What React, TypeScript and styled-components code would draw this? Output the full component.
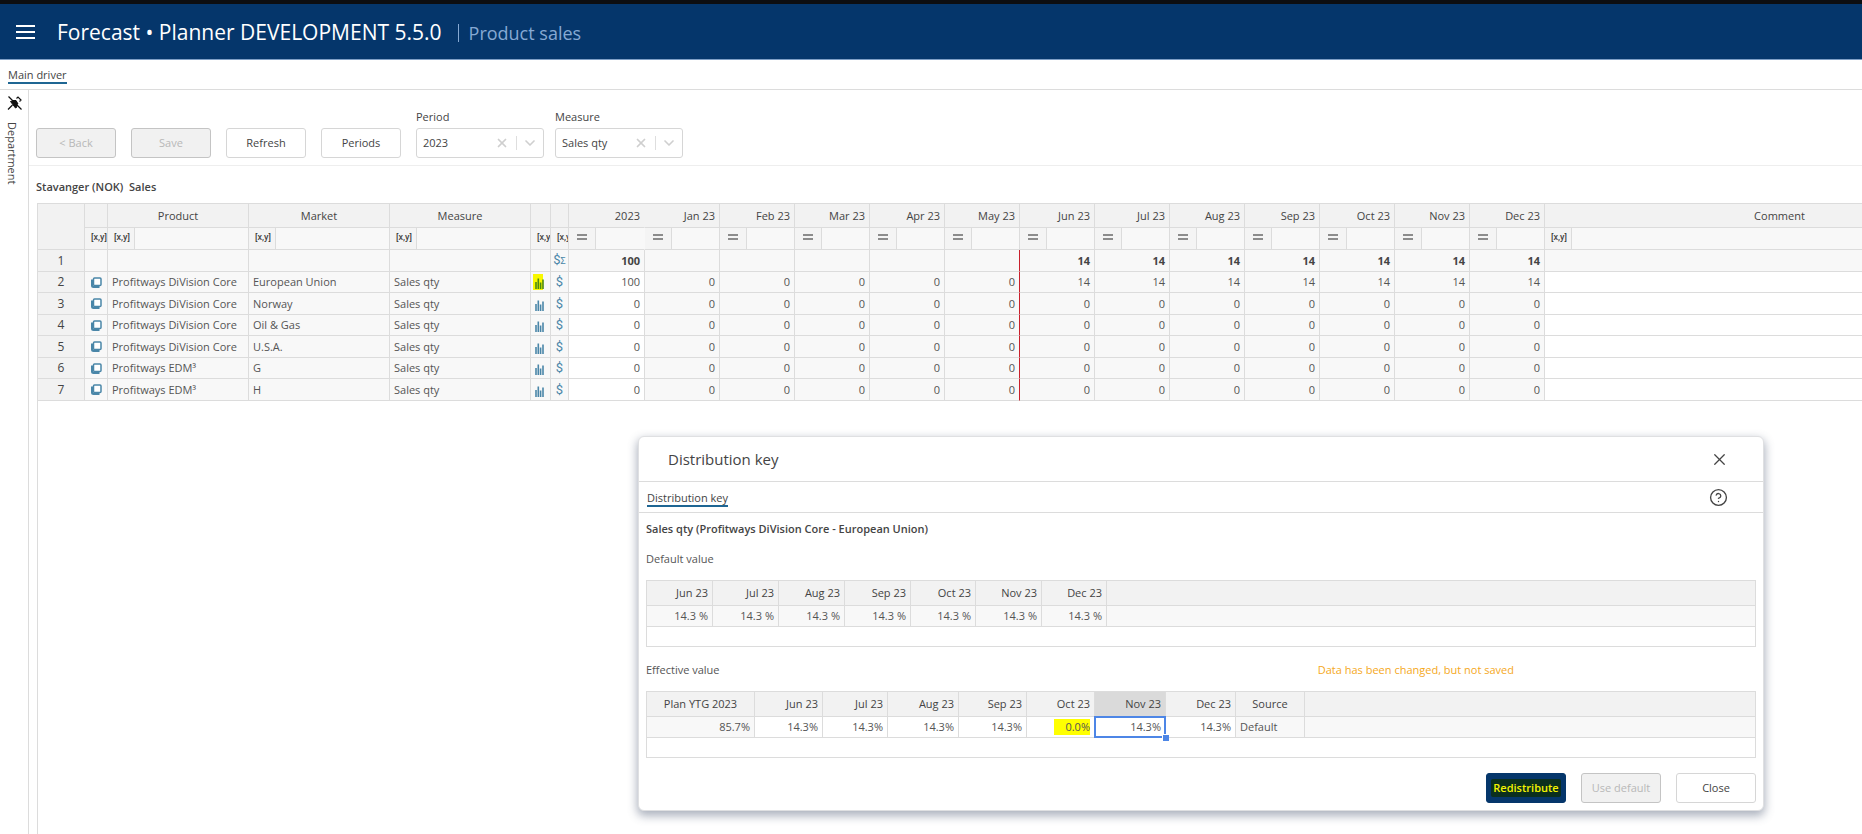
import React from 'react';
import styled, { createGlobalStyle, css } from 'styled-components';
import { ChevronDown, CircleHelp, X } from 'lucide-react';

const ink = '#444';
const line = '#dcdcdc';
const headFill = '#f2f2f2';
const cellFill = '#f8f8f8';
const navy = '#05366b';
const accent = '#4a86a8';
const font = "'Open Sans', 'Noto Sans', sans-serif";

const GlobalStyle = createGlobalStyle`
  *, *::before, *::after { box-sizing: border-box; }
  body { margin: 0; background: #fff; color: ${ink}; font: 11px/16px ${font}; }
  button, input, select { font: inherit; color: inherit; }
`;

const Page = styled.div`
  position: relative;
  display: flex;
  flex-direction: column;
  min-height: 100vh;
  overflow: hidden;
`;

const TopBar = styled.header`
  display: flex;
  align-items: center;
  height: 60px;
  padding: 0 16px;
  background: ${navy};
  border-top: 4px solid #0d0e11;
  border-bottom: 1px solid #7f9fc6;
  color: #fff;
`;

const IconButton = styled.button`
  display: flex;
  align-items: center;
  justify-content: center;
  padding: 0;
  border: 0;
  background: none;
  cursor: pointer;
`;

const AppTitle = styled.h1`
  display: flex;
  align-items: baseline;
  margin: 0 0 0 22px;
  padding-top: 1px;
  font-size: 21px;
  line-height: 28px;
  font-weight: 500;
`;

const PageName = styled.span`
  margin-left: 16px;
  padding-left: 10px;
  font-size: 18px;
  line-height: 18px;
  font-weight: 400;
  color: #86a9d3;
  border-left: 1px solid #86a9d3;
`;

const TabBar = styled.nav<{ $compact?: boolean }>`
  display: flex;
  align-items: center;
  justify-content: space-between;
  height: ${(p) => (p.$compact ? 30 : 31)}px;
  padding: 0 35px 0 8px;
  border-bottom: 1px solid ${line};
`;

const Tab = styled.a`
  padding-top: 2px;
  line-height: 15px;
  color: ${ink};
  text-decoration: none;
  border-bottom: 2px solid #1f6693;
`;

const Body = styled.div`
  display: flex;
  flex: 1;
`;

const Sidebar = styled.aside`
  display: flex;
  flex: 0 0 29px;
  flex-direction: column;
  align-items: flex-start;
  gap: 11px;
  padding: 5px 4px 0 7px;
  border-right: 1px solid ${line};
`;

const SideLabel = styled.span`
  writing-mode: vertical-rl;
  line-height: 10px;
`;

const Main = styled.main`
  display: flex;
  flex: 1;
  flex-direction: column;
  min-width: 0;
`;

const Toolbar = styled.div`
  display: flex;
  align-items: flex-end;
  gap: 15px;
  height: 76px;
  padding: 0 7px 7px;
  border-bottom: 1px solid #eee;
`;

const Button = styled.button<{ $primary?: boolean }>`
  width: 80px;
  height: 30px;
  padding: 0;
  border: 1px solid #d6d6d6;
  border-radius: 3px;
  background: #fff;
  font-weight: 500;
  cursor: pointer;

  &:disabled {
    background: #f1f1f1;
    border-color: #c4c4c4;
    color: #b8b8b8;
    cursor: default;
  }

  ${(p) =>
    p.$primary &&
    css`
      background: ${navy};
      border-color: ${navy};
      color: #f4f400;
      font-weight: 600;
    `}
`;

const ButtonMark = styled.span`
  padding: 1px 2px 2px;
  background: #0b2f1e;
  border-radius: 2px;
`;

const Fields = styled.div`
  display: flex;
  gap: 11px;
`;

const Field = styled.div`
  display: flex;
  flex-direction: column;
  gap: 3px;
  width: 128px;

  label { font-weight: 500; }
`;

const Picker = styled.div`
  display: flex;
  align-items: center;
  height: 30px;
  padding: 0 5px 0 6px;
  border: 1px solid #d6d6d6;
  border-radius: 3px;
  color: #cfcfcf;

  select {
    flex: 1;
    min-width: 0;
    padding: 0;
    border: 0;
    background: none;
    appearance: none;
    color: ${ink};
  }
`;

const Separator = styled.span`
  width: 1px;
  height: 14px;
  margin: 0 5px 0 7px;
  background: #dedede;
`;

const SheetTitle = styled.h2`
  margin: 0;
  padding: 13px 7px 8px;
  font-size: 11px;
  line-height: 16px;
  font-weight: 600;
  white-space: pre;
`;

const Sheet = styled.div`
  flex: 1;
  margin-left: 8px;
  border-top: 1px solid ${line};
  border-left: 1px solid ${line};
  overflow: hidden;
`;

const Grid = styled.table`
  width: 1957px;
  table-layout: fixed;
  border-collapse: separate;
  border-spacing: 0;

  tbody tr:nth-child(odd) { height: 22px; }
  tbody tr:nth-child(even) { height: 21px; }
`;

const HeadRow = styled.tr` height: 24px; `;
const FilterRow = styled.tr` height: 22px; `;

type Align = 'left' | 'center' | 'right';

const HeadCell = styled.th<{ $align?: Align; $open?: boolean; $active?: boolean }>`
  padding: 0 4px;
  font-weight: 500;
  text-align: ${(p) => p.$align ?? 'center'};
  background: ${(p) => (p.$active ? '#dadada' : headFill)};
  border-bottom: 1px solid ${line};
  border-right: 1px solid ${(p) => (p.$open ? headFill : line)};
`;

const FilterCell = styled.td<{ $open?: boolean }>`
  padding: 0;
  overflow: hidden;
  background: ${cellFill};
  border-bottom: 1px solid ${line};
  border-right: 1px solid ${(p) => (p.$open ? cellFill : line)};
`;

const FilterBox = styled.div`
  display: flex;
  height: 21px;

  input {
    flex: 1;
    min-width: 0;
    padding: 0 3px;
    border: 0;
    background: none;
  }
`;

const Operator = styled.button`
  display: flex;
  flex: 0 0 27px;
  align-items: center;
  padding: 0 0 4px 6px;
  border: 0;
  border-right: 1px solid ${line};
  background: #f4f4f4;
  font: 500 9px/12px Roboto, sans-serif;
`;

const RowHead = styled.th`
  padding: 0;
  font-size: 12px;
  font-weight: 400;
  line-height: 16px;
  background: ${headFill};
  border-bottom: 1px solid ${line};
  border-right: 1px solid ${line};
`;

const Cell = styled.td<{ $align?: Align; $white?: boolean; $strong?: boolean; $limit?: boolean }>`
  position: relative;
  padding: 0 4px;
  line-height: 16px;
  white-space: nowrap;
  color: ${(p) => (p.$strong ? '#444' : '#555')};
  font-weight: ${(p) => (p.$strong ? 700 : 400)};
  text-align: ${(p) => p.$align ?? 'left'};
  background: ${(p) => (p.$white ? '#fff' : cellFill)};
  border-bottom: 1px solid ${line};
  border-right: 1px solid ${(p) => (p.$limit ? '#c8202c' : line)};
`;

const IconCell = styled(Cell)`
  padding: 0;
  text-align: center;
  svg { display: block; margin: 0 auto; }
`;

const ChartMark = styled.span<{ $on?: boolean }>`
  display: block;
  width: 10px;
  height: 16px;
  margin-left: 2px;
  padding: 4px 0 0 2px;
  background: ${(p) => (p.$on ? '#f8f800' : 'none')};
  color: ${(p) => (p.$on ? '#4b8a10' : accent)};
  svg { margin: 0; }
`;

const Currency = styled.span`
  display: block;
  font: 400 13px/16px Roboto, sans-serif;
  color: ${accent};
  small { font-size: 9px; }
`;

const Dialog = styled.section`
  position: absolute;
  top: 436px;
  right: 98px;
  width: 1126px;
  max-width: calc(100% - 106px);
  background: #fff;
  border: 1px solid #dfe0e2;
  border-radius: 6px;
  box-shadow: 0 4px 10px 1px rgba(70, 85, 110, 0.45);
`;

const DialogHead = styled.header`
  display: flex;
  align-items: center;
  justify-content: space-between;
  height: 45px;
  padding: 0 34px 0 29px;
  border-bottom: 1px solid ${line};

  h2 {
    margin: 0;
    font-size: 15px;
    line-height: 20px;
    font-weight: 400;
  }
`;

const DialogBody = styled.div`
  padding: 8px 7px 7px;
`;

const Subject = styled.h3`
  margin: 0 0 14px;
  font-size: 11px;
  line-height: 16px;
  font-weight: 600;
`;

const Caption = styled.div`
  display: flex;
  justify-content: space-between;
  padding-right: 242px;
  margin-bottom: 13px;
  color: #555;
`;

const Warning = styled.span` color: #f5a81c; `;

const KeyFrame = styled.div`
  margin-bottom: 15px;
  padding-bottom: 19px;
  border: 1px solid ${line};
`;

const KeyTable = styled.table`
  width: 100%;
  table-layout: fixed;
  border-collapse: separate;
  border-spacing: 0;

  thead tr { height: 25px; }
  tbody tr { height: 21px; }
  th:last-child, td:last-child { border-right: 0; }
`;

const SelectedCell = styled(Cell)`
  z-index: 1;
  &::before {
    content: '';
    position: absolute;
    inset: -1px;
    border: 2px solid #4d86e6;
  }
  &::after {
    content: '';
    position: absolute;
    right: -4px;
    bottom: -4px;
    width: 7px;
    height: 7px;
    background: #4d86e6;
    border: 1px solid #fff;
    border-width: 1px 0 0 1px;
  }
`;

const Highlight = styled.span`
  display: inline-block;
  width: 36px;
  background: #ff0;
`;

const DialogFoot = styled.footer`
  display: flex;
  justify-content: flex-end;
  gap: 15px;
`;

const MenuIcon = () => (
  <svg width="19" height="14" viewBox="0 0 19 14" stroke="#fff" strokeWidth="2">
    <path d="M0 1h19M0 7h19M0 13h19" />
  </svg>
);

const UnpinIcon = () => (
  <svg width="16" height="16" viewBox="0 0 16 16" fill="none" stroke="#111">
    <path d="M1.500 1.500L14.500 14.500" strokeWidth="1.300" />
    <path d="M1 14.500L5.500 10" strokeWidth="1.300" />
    <path d="M3.500 6.500L6 6L10 10L9.500 12.500L8.500 13Z" fill="#111" strokeWidth="1" />
    <path d="M6 5.500L9 5.500L11 9L9 9.500Z" fill="#111" strokeWidth="1" />
    <path d="M9.500 3.500L11 2L14 5L12.500 6.500" strokeWidth="1.200" />
  </svg>
);

const CopyIcon = () => (
  <svg width="11" height="11" viewBox="0 0 11 11" fill="none" stroke={accent}>
    <path d="M1 2.500V8.500Q1 10 2.500 10H8.500" strokeWidth="2" />
    <rect x="2.500" y="1" width="7.500" height="7.500" rx="1" strokeWidth="1.500" fill="#fff" />
  </svg>
);

const BarsIcon = () => (
  <svg width="9" height="11" viewBox="0 0 9 11" stroke="currentColor" strokeWidth="1.600">
    <path d="M1 11V4M3.300 11V0.500M5.600 11V4.500M8 11V1.500" />
  </svg>
);

const EqualsIcon = () => (
  <svg width="12" height="6" viewBox="0 0 12 6" stroke="#8c8c8c" strokeWidth="2">
    <path d="M2 1h10M2 5h10" />
  </svg>
);

function Filter({ name, numeric }: { name: string; numeric?: boolean }) {
  return (
    <FilterBox>
      <Operator aria-label={`${name} operator`}>{numeric ? <EqualsIcon /> : '[x,y]'}</Operator>
      <input aria-label={`${name} filter`} />
    </FilterBox>
  );
}

function PickerField({ id, label, value }: { id: string; label: string; value: string }) {
  return (
    <Field>
      <label htmlFor={id}>{label}</label>
      <Picker>
        <select id={id} defaultValue={value}>
          <option>{value}</option>
        </select>
        <IconButton aria-label={`Clear ${label}`}>
          <X size={14} strokeWidth={3} />
        </IconButton>
        <Separator />
        <ChevronDown size={16} strokeWidth={2.5} />
      </Picker>
    </Field>
  );
}

const closed = ['Jan 23', 'Feb 23', 'Mar 23', 'Apr 23', 'May 23'];
const open = ['Jun 23', 'Jul 23', 'Aug 23', 'Sep 23', 'Oct 23', 'Nov 23', 'Dec 23'];
const months = [...closed, ...open];
const periods = ['2023', ...months];

const core = 'Profitways DiVision Core';
const edm = 'Profitways EDM³';
const rows: [string, string][] = [
  [core, 'European Union'],
  [core, 'Norway'],
  [core, 'Oil & Gas'],
  [core, 'U.S.A.'],
  [edm, 'G'],
  [edm, 'H'],
];

const columnWidths = [47, 23, 141, 141, 141, 20, 18, 76, ...months.map(() => 75), 470];
const defaultWidths = [66, 66, 66, 66, 65, 66, 65];
const effectiveWidths = [108, 68, 65, 71, 68, 68, 71, 70, 69];

const Columns = ({ widths }: { widths: number[] }) => (
  <colgroup>
    {widths.map((w, i) => (
      <col key={i} width={w} />
    ))}
  </colgroup>
);

function amount(row: number, period: string) {
  if (row > 0) return '0';
  if (period === '2023') return '100';
  return open.includes(period) ? '14' : '0';
}

function SalesGrid() {
  return (
    <Grid>
      <Columns widths={columnWidths} />
      <thead>
        <HeadRow>
          <HeadCell rowSpan={2} />
          <HeadCell />
          <HeadCell>Product</HeadCell>
          <HeadCell>Market</HeadCell>
          <HeadCell>Measure</HeadCell>
          <HeadCell />
          <HeadCell />
          {periods.map((p) => (
            <HeadCell key={p} $align="right" $open={p === '2023'}>{p}</HeadCell>
          ))}
          <HeadCell>Comment</HeadCell>
        </HeadRow>
        <FilterRow>
          {['Copy', 'Product', 'Market', 'Measure', 'Key', 'Currency'].map((n) => (
            <FilterCell key={n}><Filter name={n} /></FilterCell>
          ))}
          {periods.map((p) => (
            <FilterCell key={p} $open={p === '2023'}><Filter name={p} numeric /></FilterCell>
          ))}
          <FilterCell><Filter name="Comment" /></FilterCell>
        </FilterRow>
      </thead>
      <tbody>
        <tr>
          <RowHead>1</RowHead>
          <Cell /><Cell /><Cell /><Cell /><Cell />
          <IconCell><Currency>$<small>Σ</small></Currency></IconCell>
          {periods.map((p) => (
            <Cell key={p} $align="right" $strong $limit={p === 'May 23'}>
              {closed.includes(p) ? '' : amount(0, p)}
            </Cell>
          ))}
          <Cell />
        </tr>
        {rows.map(([product, market], r) => (
          <tr key={market}>
            <RowHead>{r + 2}</RowHead>
            <IconCell><CopyIcon /></IconCell>
            <Cell>{product}</Cell>
            <Cell>{market}</Cell>
            <Cell>Sales qty</Cell>
            <IconCell><ChartMark $on={r === 0}><BarsIcon /></ChartMark></IconCell>
            <IconCell><Currency>$</Currency></IconCell>
            {periods.map((p) => (
              <Cell key={p} $align="right" $white={p === '2023'} $limit={p === 'May 23'}>
                {amount(r, p)}
              </Cell>
            ))}
            <Cell $white />
          </tr>
        ))}
      </tbody>
    </Grid>
  );
}

function DistributionDialog() {
  return (
    <Dialog role="dialog" aria-labelledby="dialog-title">
      <DialogHead>
        <h2 id="dialog-title">Distribution key</h2>
        <IconButton aria-label="Close dialog"><X size={19} strokeWidth={1.6} /></IconButton>
      </DialogHead>
      <TabBar>
        <Tab href="#distribution-key">Distribution key</Tab>
        <IconButton aria-label="Help"><CircleHelp size={19} strokeWidth={1.7} /></IconButton>
      </TabBar>
      <DialogBody>
        <Subject>Sales qty (Profitways DiVision Core - European Union)</Subject>
        <Caption>Default value</Caption>
        <KeyFrame>
          <KeyTable>
            <Columns widths={defaultWidths} />
            <thead>
              <tr>
                {open.map((p) => <HeadCell key={p} $align="right">{p}</HeadCell>)}
                <HeadCell />
              </tr>
            </thead>
            <tbody>
              <tr>
                {open.map((p) => <Cell key={p} $align="right">14.3 %</Cell>)}
                <Cell />
              </tr>
            </tbody>
          </KeyTable>
        </KeyFrame>
        <Caption>
          Effective value
          <Warning>Data has been changed, but not saved</Warning>
        </Caption>
        <KeyFrame>
          <KeyTable>
            <Columns widths={effectiveWidths} />
            <thead>
              <tr>
                <HeadCell>Plan YTG 2023</HeadCell>
                {open.map((p) => (
                  <HeadCell key={p} $align="right" $active={p === 'Nov 23'}>{p}</HeadCell>
                ))}
                <HeadCell>Source</HeadCell>
                <HeadCell />
              </tr>
            </thead>
            <tbody>
              <tr>
                <Cell $align="right">85.7%</Cell>
                <Cell $align="right" $white>14.3%</Cell>
                <Cell $align="right" $white>14.3%</Cell>
                <Cell $align="right" $white>14.3%</Cell>
                <Cell $align="right" $white>14.3%</Cell>
                <Cell $align="right" $white><Highlight>0.0%</Highlight></Cell>
                <SelectedCell $align="right" $white>14.3%</SelectedCell>
                <Cell $align="right" $white>14.3%</Cell>
                <Cell>Default</Cell>
                <Cell />
              </tr>
            </tbody>
          </KeyTable>
        </KeyFrame>
        <DialogFoot>
          <Button $primary><ButtonMark>Redistribute</ButtonMark></Button>
          <Button disabled>Use default</Button>
          <Button>Close</Button>
        </DialogFoot>
      </DialogBody>
    </Dialog>
  );
}

export default function App() {
  return (
    <Page>
      <GlobalStyle />
      <TopBar>
        <IconButton aria-label="Menu"><MenuIcon /></IconButton>
        <AppTitle>
          Forecast • Planner DEVELOPMENT 5.5.0
          <PageName>Product sales</PageName>
        </AppTitle>
      </TopBar>
      <TabBar $compact>
        <Tab href="#main-driver">Main driver</Tab>
      </TabBar>
      <Body>
        <Sidebar>
          <IconButton aria-label="Unpin panel"><UnpinIcon /></IconButton>
          <SideLabel>Department</SideLabel>
        </Sidebar>
        <Main>
          <Toolbar>
            <Button disabled>&lt; Back</Button>
            <Button disabled>Save</Button>
            <Button>Refresh</Button>
            <Button>Periods</Button>
            <Fields>
              <PickerField id="period" label="Period" value="2023" />
              <PickerField id="measure" label="Measure" value="Sales qty" />
            </Fields>
          </Toolbar>
          <SheetTitle>{'Stavanger (NOK)  Sales'}</SheetTitle>
          <Sheet>
            <SalesGrid />
          </Sheet>
        </Main>
      </Body>
      <DistributionDialog />
    </Page>
  );
}
